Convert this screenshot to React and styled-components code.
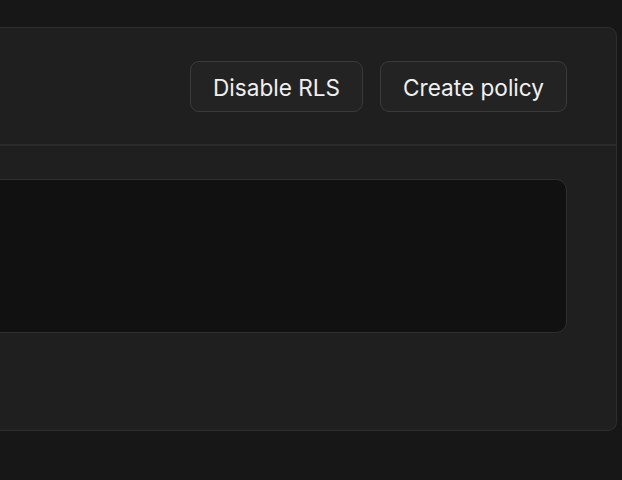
import styled, { createGlobalStyle } from "styled-components";

const GlobalStyle = createGlobalStyle`
  html, body {
    margin: 0;
    padding: 0;
    background: #171717;
    font-family: Inter, "Noto Sans", sans-serif;
    overflow: hidden;
  }
`;

const Page = styled.div`
  width: 622px;
  height: 480px;
  padding: 27px 5px 0 0;
  box-sizing: border-box;
  display: flex;
  justify-content: flex-end;
  overflow: hidden;
`;

const Card = styled.section`
  width: 1000px;
  min-width: 1000px;
  flex-shrink: 0;
  height: 404px;
  box-sizing: border-box;
  background: #1f1f1f;
  border: 1px solid #2e2e2e;
  border-radius: 9px;
  display: flex;
  flex-direction: column;
`;

const Header = styled.header`
  height: 118px;
  box-sizing: border-box;
  border-bottom: 2px solid #2b2b2b;
  display: flex;
  align-items: center;
  justify-content: flex-end;
  gap: 17px;
  padding: 0 49px;
`;

const Button = styled.button`
  height: 51px;
  padding: 3px 22px 0;
  box-sizing: border-box;
  background: #232323;
  border: 1px solid #3a3a3a;
  border-radius: 9px;
  color: #f0f0f0;
  font-family: inherit;
  font-size: 22.6px;
  font-weight: 400;
  cursor: pointer;
`;

const Body = styled.div`
  padding: 33px 49px 0;
`;

const Editor = styled.div`
  height: 154px;
  box-sizing: border-box;
  background: #111111;
  border: 1px solid #2e2e2e;
  border-radius: 11px;
`;

export default function App() {
  return (
    <>
      <GlobalStyle />
      <Page>
        <Card>
          <Header>
            <Button>Disable RLS</Button>
            <Button>Create policy</Button>
          </Header>
          <Body>
            <Editor />
          </Body>
        </Card>
      </Page>
    </>
  );
}
